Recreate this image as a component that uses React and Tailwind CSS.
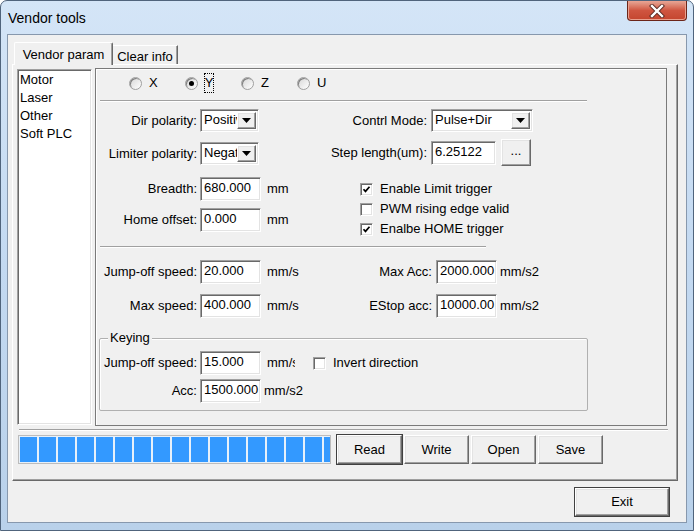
import React from 'react';

const sunken =
  'border border-t-[#a0a0a0] border-l-[#a0a0a0] border-r-white border-b-white shadow-[inset_1px_1px_0_#696969,inset_-1px_-1px_0_#e3e3e3]';
const raised =
  'border border-t-white border-l-white border-r-[#696969] border-b-[#696969] shadow-[inset_-1px_-1px_0_#a0a0a0,inset_1px_1px_0_#e3e3e3] bg-[#f0f0f0]';

function Edit({ value, className }) {
  return (
    <div className={`${sunken} bg-white h-[24px] flex items-center pl-[3px] pb-[2px] overflow-hidden whitespace-nowrap ${className}`}>
      {value}
    </div>
  );
}

function Combo({ value, className }) {
  return (
    <div className={`${sunken} bg-white h-[23px] flex items-center p-[2px] ${className}`}>
      <span className="flex-1 overflow-hidden whitespace-nowrap pl-[1px] pb-[1px]">{value}</span>
      <div className={`${raised} w-[19px] h-full flex items-center justify-center`}>
        <svg width="9" height="5" viewBox="0 0 9 5">
          <path d="M0 0h9L4.5 5z" fill="#000" />
        </svg>
      </div>
    </div>
  );
}

function Check({ checked }) {
  return (
    <div className={`${sunken} bg-white w-[13px] h-[13px] flex items-center justify-center shrink-0`}>
      {checked && (
        <svg width="9" height="9" viewBox="0 0 9 9">
          <path d="M1.5 4.2l2 2.2 4-4.6" fill="none" stroke="#000" strokeWidth="1.7" />
        </svg>
      )}
    </div>
  );
}

function Radio({ label, checked }) {
  return (
    <div className="w-[56px] flex items-center">
      <div className="w-[13px] h-[13px] rounded-full border border-[#a0a0a0] bg-gradient-to-br from-[#d6d6d6] to-white flex items-center justify-center shadow-[inset_1px_1px_0_#808080]">
        {checked && <div className="w-[5px] h-[5px] rounded-full bg-black" />}
      </div>
      {checked ? (
        <span className="ml-[6px] w-[10px] h-[20px] border border-dotted border-black flex items-center justify-center">{label}</span>
      ) : (
        <span className="ml-[7px]">{label}</span>
      )}
    </div>
  );
}

function Button({ children, className, isDefault }) {
  return (
    <div className={`${isDefault ? 'outline outline-1 outline-[#404040]' : ''} ${raised} flex items-center justify-center ${className}`}>
      {children}
    </div>
  );
}

function Sep({ className }) {
  return <div className={`h-[2px] border-t border-t-[#a0a0a0] border-b border-b-white ${className}`} />;
}

export default function App() {
  const blocks = Array.from({ length: 17 });
  return (
    <div className="w-[694px] h-[531px] bg-white overflow-hidden font-['Liberation_Sans',Arial,sans-serif] text-[13px] text-black">
      <div className="w-full h-full rounded-t-[7px] border border-[#50647c] bg-gradient-to-b from-[#d4e5f7] via-[#c3d9f1] to-[#b9d1ea] flex flex-col">
        {/* title bar */}
        <div className="h-[33px] flex items-start shrink-0">
          <span className="ml-[7px] mt-[8px] text-[14px] leading-[18px]">Vendor tools</span>
          <div className="ml-auto mr-[6px] w-[60px] h-[20px] rounded-b-[4px] border border-t-0 border-[#6b2519] bg-gradient-to-b from-[#e6a797] via-[#cf5540] to-[#c4452e] flex items-center justify-center shadow-[inset_0_0_0_1px_#e9a08e]">
            <svg width="18" height="14" viewBox="0 0 18 14">
              <path d="M4 2l10 10M14 2L4 12" stroke="#5a2a22" strokeWidth="4.2" strokeLinecap="square" />
              <path d="M4 2l10 10M14 2L4 12" stroke="#fff" strokeWidth="2.4" strokeLinecap="square" />
            </svg>
          </div>
        </div>

        {/* client area */}
        <div className="mx-[6px] h-[489px] border border-[#8798ad] bg-[#f0f0f0] flex flex-col">
          {/* tab control */}
          <div className="ml-[4px] mt-[7px] w-[666px]">
            <div className="flex items-end h-[22px] pl-[2px]">
              <div className="relative z-10 w-[99px] h-[23px] -mb-[1px] bg-[#f0f0f0] border-t border-l border-white border-r border-r-[#696969] shadow-[inset_-1px_0_0_#a0a0a0] rounded-t-[2px] flex items-start justify-center pt-[2px]">
                Vendor param
              </div>
              <div className="w-[65px] h-[19px] border-t border-white border-r border-r-[#696969] shadow-[inset_-1px_0_0_#a0a0a0] flex items-start justify-center pt-[1px]">
                Clear info
              </div>
            </div>
            <div className="h-[417px] border-t border-l border-white border-r border-b border-r-[#696969] border-b-[#696969] shadow-[inset_-1px_-1px_0_#a0a0a0] flex flex-col">
              <div className="flex items-start mt-[4px] pl-[4px]">
                {/* list box */}
                <div className={`${sunken} bg-white w-[75px] h-[356px] pt-[1px] pl-[2px]`}>
                  {['Motor', 'Laser', 'Other', 'Soft PLC'].map((t) => (
                    <div key={t} className="h-[18px] leading-[18px]">{t}</div>
                  ))}
                </div>

                {/* inner panel */}
                <div className="ml-[3px] -mt-[1px] w-[572px] h-[358px] border border-[#7a7a7a] shadow-[inset_1px_1px_0_#fff] flex flex-col">
                  <div className="mt-[4px] h-[20px] pl-[33px] flex items-center">
                    <Radio label="X" />
                    <Radio label="Y" checked />
                    <Radio label="Z" />
                    <Radio label="U" />
                  </div>
                  <Sep className="mt-[7px] ml-[4px] w-[487px]" />

                  <div className="mt-[7px] flex">
                    <div className="w-[203px] flex flex-col">
                      <div className="h-[23px] flex items-center">
                        <span className="w-[101px] text-right">Dir polarity:</span>
                        <Combo value="Positive" className="ml-[3px] w-[59px]" />
                      </div>
                      <div className="mt-[10px] h-[23px] flex items-center">
                        <span className="w-[101px] text-right">Limiter polarity:</span>
                        <Combo value="Negative" className="ml-[3px] w-[59px]" />
                      </div>
                      <div className="mt-[12px] h-[24px] flex items-center">
                        <span className="w-[101px] text-right">Breadth:</span>
                        <Edit value="680.000" className="ml-[3px] w-[61px]" />
                        <span className="ml-[6px]">mm</span>
                      </div>
                      <div className="mt-[7px] h-[24px] flex items-center">
                        <span className="w-[101px] text-right">Home offset:</span>
                        <Edit value="0.000" className="ml-[3px] w-[61px]" />
                        <span className="ml-[6px]">mm</span>
                      </div>
                    </div>
                    <div className="flex flex-col">
                      <div className="h-[23px] flex items-center">
                        <span className="w-[128px] text-right">Contrl Mode:</span>
                        <Combo value="Pulse+Dir" className="ml-[4px] w-[102px]" />
                      </div>
                      <div className="mt-[7px] h-[27px] flex items-center">
                        <span className="w-[128px] text-right">Step length(um):</span>
                        <Edit value="6.25122" className="ml-[4px] w-[65px]" />
                        <Button className="ml-[5px] w-[30px] h-[27px] pb-[4px]">...</Button>
                      </div>
                      <div className="mt-[13px] ml-[61px] flex flex-col">
                        {[
                          ['Enable Limit trigger', true],
                          ['PWM rising edge valid', false],
                          ['Enalbe HOME trigger', true],
                        ].map(([t, c]) => (
                          <div key={t} className="h-[20px] flex items-center">
                            <Check checked={c} />
                            <span className="ml-[7px]">{t}</span>
                          </div>
                        ))}
                      </div>
                    </div>
                  </div>

                  <Sep className="mt-[7px] ml-[4px] w-[386px]" />

                  <div className="mt-[12px] h-[24px] flex items-center">
                    <div className="w-[203px] flex items-center">
                      <span className="w-[101px] text-right">Jump-off speed:</span>
                      <Edit value="20.000" className="ml-[3px] w-[61px]" />
                      <span className="ml-[6px]">mm/s</span>
                    </div>
                    <span className="w-[133px] text-right">Max Acc:</span>
                    <Edit value="2000.000" className="ml-[4px] w-[61px]" />
                    <span className="ml-[3px]">mm/s2</span>
                  </div>
                  <div className="mt-[10px] h-[24px] flex items-center">
                    <div className="w-[203px] flex items-center">
                      <span className="w-[101px] text-right">Max speed:</span>
                      <Edit value="400.000" className="ml-[3px] w-[61px]" />
                      <span className="ml-[6px]">mm/s</span>
                    </div>
                    <span className="w-[133px] text-right">EStop acc:</span>
                    <Edit value="10000.00" className="ml-[4px] w-[61px]" />
                    <span className="ml-[3px]">mm/s2</span>
                  </div>

                  {/* keying group */}
                  <div className="relative mt-[20px] ml-[3px] w-[489px] h-[73px] border border-[#b0b0b0] shadow-[inset_1px_1px_0_#fff] rounded-[2px] pt-[12px]">
                    <span className="absolute left-[8px] -top-[9px] px-[2px] bg-[#f0f0f0] leading-[16px]">Keying</span>
                    <div className="h-[24px] flex items-center">
                      <span className="w-[97px] text-right">Jump-off speed:</span>
                      <Edit value="15.000" className="ml-[3px] w-[61px]" />
                      <span className="ml-[6px] w-[28px] overflow-hidden whitespace-nowrap">mm/s</span>
                      <div className="ml-[18px]"><Check /></div>
                      <span className="ml-[7px]">Invert direction</span>
                    </div>
                    <div className="mt-[4px] h-[24px] flex items-center">
                      <span className="w-[97px] text-right">Acc:</span>
                      <Edit value="1500.000" className="ml-[3px] w-[61px]" />
                      <span className="ml-[3px]">mm/s2</span>
                    </div>
                  </div>
                </div>
              </div>

              <Sep className="mt-[3px] ml-[6px] w-[649px]" />

              <div className="mt-[4px] ml-[5px] flex items-center">
                <div className="w-[313px] h-[29px] border border-[#bcbcbc] bg-[#e6f0fa] p-[1px] flex gap-[2px] overflow-hidden">
                  {blocks.map((_, i) => (
                    <div key={i} className="w-[17px] h-full bg-[#3399ff] shrink-0" />
                  ))}
                </div>
                <Button isDefault className="ml-[6px] w-[65px] h-[29px]">Read</Button>
                <Button className="ml-[2px] w-[65px] h-[29px]">Write</Button>
                <Button className="ml-[2px] w-[65px] h-[29px]">Open</Button>
                <Button className="ml-[2px] w-[65px] h-[29px]">Save</Button>
              </div>
            </div>
          </div>

          <div className="mt-[7px] mr-[17px] self-end">
            <Button isDefault className="w-[94px] h-[28px]">Exit</Button>
          </div>
        </div>
      </div>
    </div>
  );
}
